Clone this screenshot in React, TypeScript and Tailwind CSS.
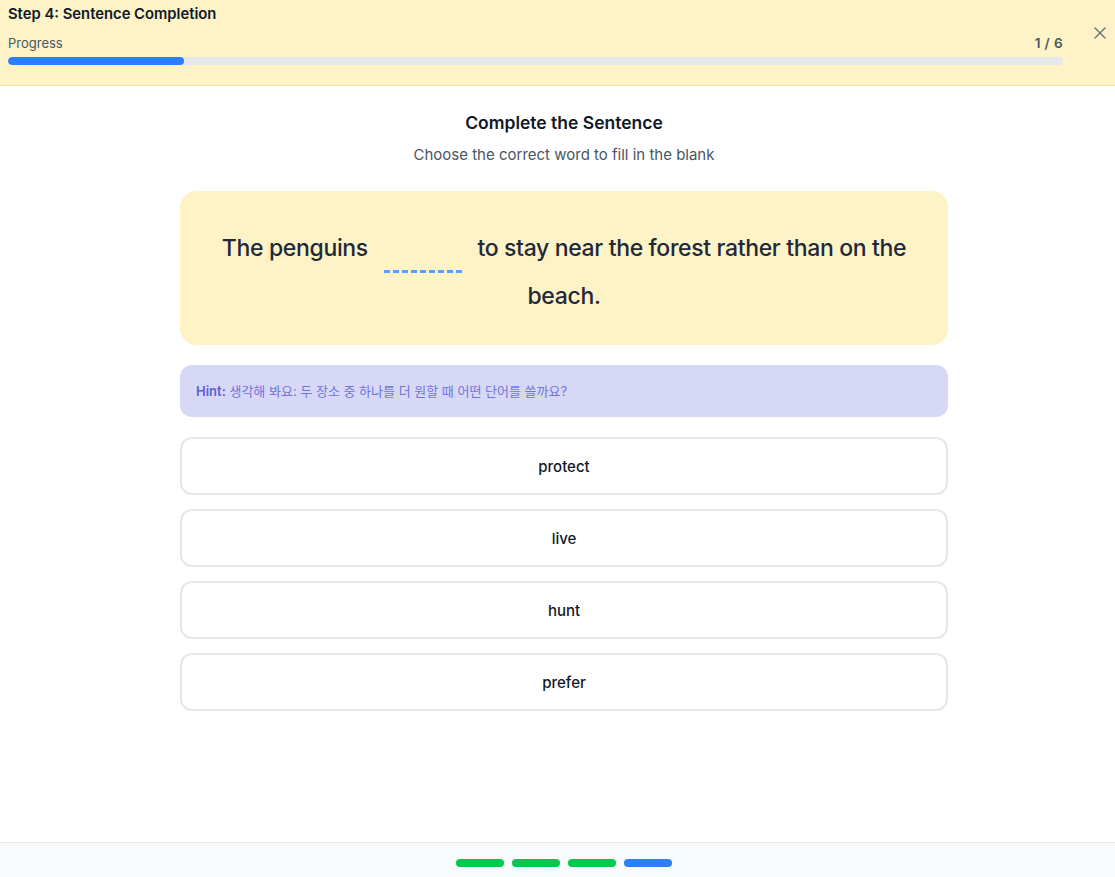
import { X } from "lucide-react"

const options = ["protect", "live", "hunt", "prefer"]
const steps = ["done", "done", "done", "current"]

export default function App() {
  return (
    <div
      className="flex flex-col h-[877px] bg-white text-gray-900"
      style={{ fontFamily: "Inter, 'Noto Sans CJK KR', sans-serif" }}
    >
      {/* ── Header ── */}
      <div className="flex items-start gap-[27px] pl-2 pr-[5px] pt-[5px] h-[86px] shrink-0 bg-[#fef3c7] border-b border-[#fbe49a]">
        <div className="flex-1">
          <h1 className="text-[14.8px] font-semibold leading-[18px] text-gray-900">
            Step 4: Sentence Completion
          </h1>
          <div className="mt-[12px] flex items-center justify-between text-[13px] leading-[16px]">
            <span className="text-gray-600">Progress</span>
            <span className="font-semibold text-gray-600 text-[13.5px] tracking-[0.03em]">1 / 6</span>
          </div>
          <div className="mt-[6px] h-2 rounded-full bg-gray-200 overflow-hidden">
            <div className="h-full w-[176px] rounded-full bg-[#2b7fff]" />
          </div>
        </div>
        <button className="mt-[18px] text-gray-500">
          <X size={20} strokeWidth={1.75} />
        </button>
      </div>

      {/* ── Main ── */}
      <div className="flex-1 flex justify-center pl-[13px]">
        <div className="w-[768px] pt-[25px]">
          <h2 className="text-center text-[17.5px] font-semibold leading-[24px] text-gray-900">
            Complete the Sentence
          </h2>
          <p className="mt-[10px] text-center text-[15px] leading-[20px] text-gray-600">
            Choose the correct word to fill in the blank
          </p>

          <div className="mt-[26px] rounded-2xl bg-[#fef3c7] px-10 pt-[34px] pb-[25px] text-center text-[23px] tracking-[-0.015em] font-medium leading-[47px] text-gray-800">
            The penguins{" "}
            <span className="inline-block w-[78px] mx-[10px] border-b-[3px] border-dashed border-[#51a2ff] align-[-17px]" />{" "}
            to stay near the forest rather than on the beach.
          </div>

          <div className="mt-[20px] rounded-xl bg-[#d7d8f6] px-4 pt-[18px] pb-[17px] text-[13px] leading-[17px]">
            <span className="font-semibold text-[#5b5fd6]">Hint:</span>{" "}
            <span className="text-[#7075dc]">생각해 봐요: 두 장소 중 하나를 더 원할 때 어떤 단어를 쓸까요?</span>
          </div>

          <div className="mt-[20px] flex flex-col gap-[14px]">
            {options.map((o) => (
              <button
                key={o}
                className="h-[58px] rounded-xl border-2 border-gray-200 bg-white pt-[2px] text-[15px] font-medium text-gray-900"
              >
                {o}
              </button>
            ))}
          </div>
        </div>
      </div>

      {/* ── Footer ── */}
      <div className="h-[35px] shrink-0 border-t border-gray-200 bg-gray-50 flex items-start justify-center gap-2 pt-[16px] pl-[13px]">
        {steps.map((s, i) => (
          <span
            key={i}
            className={`h-2 w-12 rounded-full ${s === "done" ? "bg-[#00c950]" : "bg-[#2b7fff]"}`}
          />
        ))}
      </div>
    </div>
  )
}
